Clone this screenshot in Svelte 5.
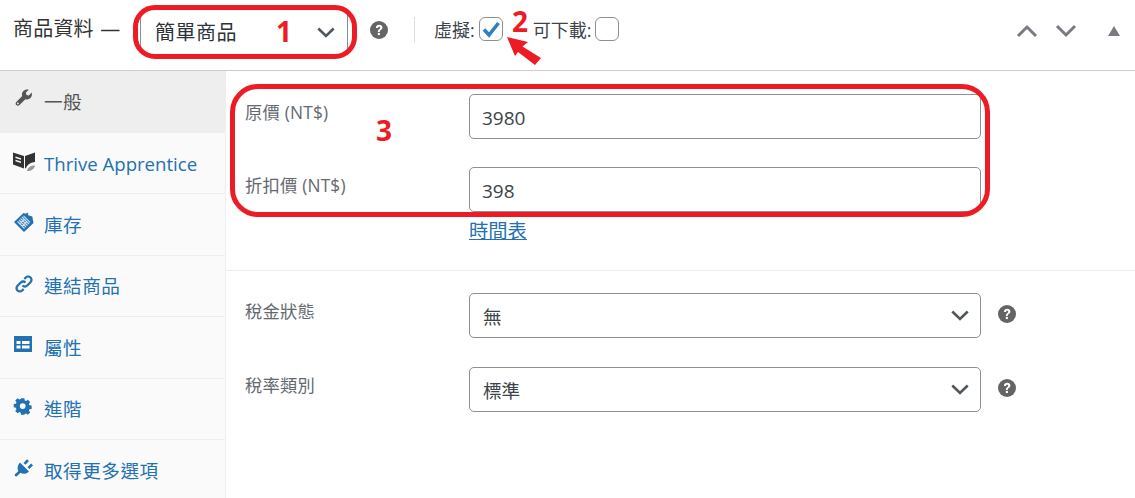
<script>
  const tabs = [
    { label: '一般', icon: 'wrench', active: true, cjk: true },
    { label: 'Thrive Apprentice', icon: 'book', shift: true },
    { label: '庫存', icon: 'tag', cjk: true },
    { label: '連結商品', icon: 'link', cjk: true },
    { label: '屬性', icon: 'table', cjk: true },
    { label: '進階', icon: 'gear', cjk: true },
    { label: '取得更多選項', icon: 'plug', cjk: true }
  ];
</script>

{#snippet help()}
  <svg class="help" viewBox="0 0 18 18" aria-hidden="true">
    <circle cx="9" cy="9" r="9" fill="#646464" />
    <path d="M5.9 6.9C6 4.9 7.3 3.8 9.2 3.8c1.900 0 3.200 1.100 3.200 2.700 0 1.200-.6 1.900-1.600 2.600-.8.5-1 .8-1 1.500v.4H7.900v-.6c0-1 .4-1.600 1.200-2.200.8-.6 1.100-.9 1.100-1.500 0-.6-.4-1-1-1-.7 0-1.100.5-1.200 1.200z" fill="#fff" />
    <rect x="7.800" y="11.900" width="2.100" height="2.200" fill="#fff" />
  </svg>
{/snippet}

{#snippet chevron()}
  <svg class="chev" viewBox="0 0 18 11" aria-hidden="true">
    <path d="M1.300 1.500 9 9l7.700-7.500" fill="none" stroke="#50575e" stroke-width="2.600" />
  </svg>
{/snippet}

<div class="page">
  <header class="head">
    <span class="title">商品資料 —</span>
    <div class="type">簡單商品 {@render chevron()}</div>
    <span class="head-help">{@render help()}</span>
    <span class="divider"></span>
    <label class="check first">虛擬:
      <span class="box">
        <svg viewBox="0 0 24 24" width="24" height="24" aria-hidden="true"><path d="M5 12.500l5 5.500L19.500 6" fill="none" stroke="#2f7fc4" stroke-width="3.600" /></svg>
      </span>
    </label>
    <label class="check second">可下載:<span class="box"></span></label>
    <div class="handles">
      <svg width="22" height="14" viewBox="0 0 22 14" aria-hidden="true"><path d="M2 12l9-9 9 9" fill="none" stroke="#787c82" stroke-width="3" /></svg>
      <svg width="22" height="14" viewBox="0 0 22 14" aria-hidden="true"><path d="M2 2l9 9 9-9" fill="none" stroke="#787c82" stroke-width="3" /></svg>
      <svg class="tri" width="12" height="10" viewBox="0 0 12 10" aria-hidden="true"><path d="M6 0l6 10H0z" fill="#787c82" /></svg>
    </div>
  </header>

  <div class="body">
    <nav class="tabs">
      {#each tabs as t}
        <div class="tab" class:active={t.active} class:cjk={t.cjk} class:low={t.shift}>
          <svg class="ico" viewBox="0 0 20 20" aria-hidden="true">
            {#if t.icon === 'wrench'}
              <path fill="#555" d="M17.700 3.600l-2.900 2.900-2.300-.6-.6-2.300 2.900-2.900c-2-.6-4.200-.1-5.500 1.300-1.400 1.400-1.700 3.300-1.100 5L2.300 12.900C1.400 13.800 1.400 15.200 2.300 16.100s2.300.9 3.200 0L11.400 10.200c1.700.6 3.700.3 5.100-1.100 1.400-1.400 1.800-3.500 1.200-5.500zM3.900 15.300a.9.9 0 110-1.800.9.9 0 010 1.800z" />
            {:else if t.icon === 'book'}
              <path fill="#333" d="M-1 1.500l11 3.500v12.500L-1 13.500zM11 5l10-3.500v9.500c-3.800.2-7.500 2.500-9 6l-1 .5z" />
              <path fill="#fff" d="M1.500 5.500l5.500 1.700v1.500L1.500 7zM1.500 8.700l5.500 1.700v1.500L1.500 10.200z" />
              <path fill="#999" d="M13 20c.5-3.500 3.500-5.500 8-5.500-.5 3.500-3.500 5.500-8 5.500z" />
            {:else if t.icon === 'tag'}
              <path fill="#2271b1" d="M0 10L9.500 1l2.500.8 1-1.300 1.500 1.200-.8 1.200 4.600 1.600 1.200 6.500-9.500 9z" />
              <path stroke="#cfe0f0" stroke-width="1.100" fill="none" d="M3.500 9.500l7 7M5 8l7 7M6.500 6.500l7 7M8 5l7 7M9.500 3.800l6.500 6.500M5.500 12l5-5M8 14.500l5-5" />
            {:else if t.icon === 'link'}
              <path fill="none" stroke="#2271b1" stroke-width="2.300" d="M8.500 11.500a3.300 3.300 0 004.700 0l3.300-3.300a3.300 3.300 0 00-4.700-4.700l-1.500 1.500M11.500 8.500a3.300 3.300 0 00-4.700 0l-3.300 3.300a3.300 3.300 0 004.700 4.700l1.500-1.500" />
            {:else if t.icon === 'table'}
              <path fill="#2271b1" d="M0 1h18v16H0z" />
              <path fill="#fff" d="M2.500 6h4v3h-4zM8 6h7.500v3H8zM2.500 10.500h4v3h-4zM8 10.500h7.500v3H8z" />
            {:else if t.icon === 'gear'}
              <path fill="#2271b1" fill-rule="evenodd" d="M8 1h4l.5 2.600 1.600.7 2.200-1.500 2.800 2.800-1.500 2.200.7 1.600 2.600.5v4l-2.600.5-.7 1.600 1.500 2.200-2.800 2.800-2.200-1.500-1.600.7L12 21H8l-.5-2.600-1.600-.7-2.200 1.500L.9 16.400l1.500-2.200-.7-1.600L-.9 12V8l2.600-.5.7-1.600L.9 3.700 3.700.9l2.200 1.500 1.600-.7zM10 7a3.500 3.500 0 100 7 3.500 3.500 0 000-7z" transform="translate(.5 .5) scale(.82)" />
            {:else}
              <path fill="#2271b1" d="M6 4.500l9 9c-2.500 2.500-6 3-8.500 1.300L2.500 18.500 1 18l-.3-1.500 3.600-3.300C3 10.500 3.500 7 6 4.500zM9.500 5L13 1.300l2 1.800-3.500 3.700zM13.500 9L17.200 5.500l1.800 2-3.700 3.500z" />
            {/if}
          </svg>
          <span>{t.label}</span>
        </div>
      {/each}
    </nav>

    <main class="panel">
      <section class="group pricing">
        <div class="row">
          <label for="reg">原價 (NT$)</label>
          <input id="reg" value="3980" />
        </div>
        <div class="row">
          <label for="sale">折扣價 (NT$)</label>
          <input id="sale" value="398" />
        </div>
        <a class="schedule" href="#top">時間表</a>
      </section>
      <section class="group tax">
        <div class="row">
          <span class="lab">稅金狀態</span>
          <div class="sel">無 {@render chevron()}</div>
          {@render help()}
        </div>
        <div class="row">
          <span class="lab">稅率類別</span>
          <div class="sel">標準 {@render chevron()}</div>
          {@render help()}
        </div>
      </section>
    </main>
  </div>

  <span class="ring r1"></span>
  <span class="ring r3"></span>
  <span class="num n1">1</span>
  <span class="num n2">2</span>
  <span class="num n3">3</span>
  <svg class="arrow" width="60" height="50" viewBox="500 30 60 50" aria-hidden="true">
    <path fill="#ed1c24" d="M507 37l21 5-5.500 4.500 18.500 11.500-6 7-17-13-3 4z" />
  </svg>
</div>

<style>
  :global(body) { margin: 0; background: #fff; }
  .page {
    position: relative;
    width: 1135px;
    height: 498px;
    overflow: hidden;
    font-family: "Open Sans", "Noto Sans CJK TC", sans-serif;
    color: #3c434a;
  }
  .head {
    height: 58px;
    padding: 0 0 12px 14px;
    display: flex;
    align-items: center;
    border-bottom: 1px solid #ccc;
    box-sizing: content-box;
  }
  .title { font-size: 20px; width: 127px; flex: none; color: #333; white-space: nowrap; word-spacing: 1px; letter-spacing: .2px; margin-top: -4px; margin-left: -1px; }
  .type {
    width: 208px;
    height: 36px;
    margin-top: 7px;
    box-sizing: border-box;
    border-left: 1px solid #8c8f94;
    border-right: 1px solid #8c8f94;
    padding-left: 14px;
    padding-right: 12px;
    font-size: 20px;
    letter-spacing: .5px;
    color: #2c3338;
    display: flex;
    justify-content: space-between;
    align-items: center;
    line-height: 36px;
    flex: none;
  }
  .head-help { margin-left: 22px; display: flex; margin-top: 2px; }
  .divider { width: 1px; height: 25px; margin-left: 26px; background: #ddd; }
  .check { display: flex; align-items: center; gap: 4px; font-size: 18px; color: #3c434a; white-space: nowrap; }
  .check.first { margin-left: 19px; }
  .check.second { margin-left: 30px; }
  .box {
    width: 24px;
    height: 24px;
    box-sizing: border-box;
    border: 1px solid #8c8f94;
    border-radius: 6px;
    background: #fff;
    display: block;
    position: relative;
  }
  .box svg { position: absolute; left: -1px; top: -1px; }
  .handles { margin-left: auto; margin-right: 15px; margin-top: 4px; display: flex; align-items: center; gap: 17px; }
  .handles .tri { margin-left: 14px; }
  .body { display: flex; height: 427px; }
  .tabs {
    width: 225px;
    flex: none;
    background: #fafafa;
    border-right: 1px solid #eee;
    box-sizing: content-box;
  }
  .tab {
    border-bottom: 1px solid #eee;
    display: flex;
    align-items: center;
    gap: 10px;
    padding: 0 0 2px 14px;
    box-sizing: content-box;
    height: 58.500px;
    font-size: 18.600px;
    color: #2271b1;
    white-space: nowrap;
  }
  .tab.cjk { letter-spacing: .5px; }
  .tab.low span { margin-top: 4px; }
  .tab.active { background: #eee; color: #555; border-bottom-color: #eee; }
  .ico { width: 20px; height: 20px; flex: none; margin-top: -2px; overflow: visible; }
  .panel { flex: 1; }
  .group { padding-left: 19px; }
  .pricing { height: 200px; padding-top: 23px; box-sizing: border-box; border-bottom: 1px solid #eee; }
  .tax { padding-top: 22px; }
  .row { display: flex; align-items: flex-start; height: 45px; margin-bottom: 29px; }
  .pricing .row { margin-bottom: 28px; }
  .row label, .lab {
    width: 224px;
    flex: none;
    font-size: 17.300px;
    letter-spacing: .2px;
    color: #646970;
    line-height: 36px;
    padding-top: 1px;
  }
  input, .sel {
    width: 512px;
    height: 45px;
    box-sizing: border-box;
    border: 1px solid #8c8f94;
    border-radius: 5px;
    padding: 2px 12px 0;
    font: inherit;
    font-size: 19px;
    color: #3c434a;
    background: #fff;
    outline: none;
  }
  .sel { display: flex; justify-content: space-between; align-items: center; padding: 0 11px 0 13px; font-size: 18.600px; }
  .row .help { margin: 12px 0 0 17px; }
  .pricing .row + .row { margin-bottom: 0; }
  .schedule { display: block; margin: 6px 0 0 224px; font-size: 19.300px; color: #2271b1; line-height: 26px; }
  .help { width: 18px; height: 18px; flex: none; display: block; }
  .chev { width: 18px; height: 11px; flex: none; display: block; }
  .ring { position: absolute; border: 5px solid #ed1c24; box-sizing: border-box; pointer-events: none; }
  .r1 { left: 133px; top: 5px; width: 224px; height: 54px; border-radius: 22px; }
  .r3 { left: 230px; top: 84px; width: 760px; height: 133px; border-radius: 28px; }
  .num { position: absolute; font-weight: 700; font-size: 28px; line-height: 1; color: #ed1c24; }
  .n1 { left: 276px; top: 17px; }
  .n2 { left: 512px; top: 7px; }
  .n3 { left: 376px; top: 116px; }
  .arrow { position: absolute; left: 500px; top: 30px; }
</style>
